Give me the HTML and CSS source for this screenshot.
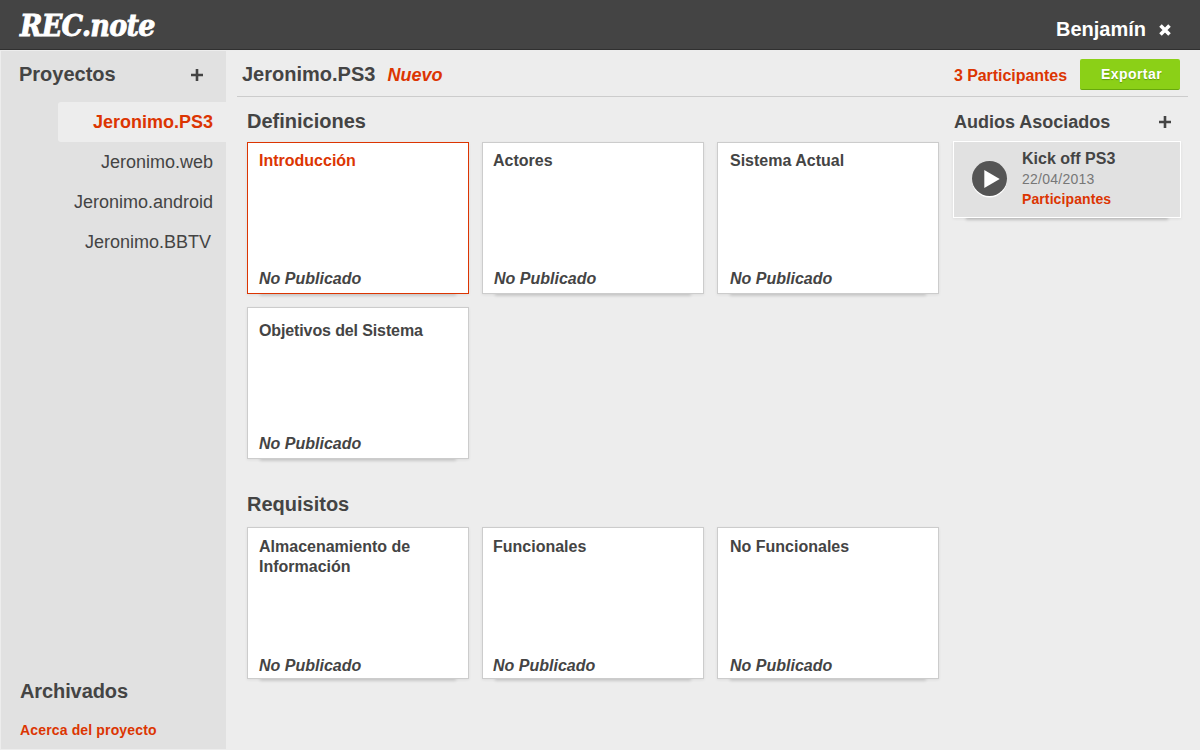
FILE: index.html
```
<!DOCTYPE html>
<html lang="es">
<head>
<meta charset="utf-8">
<title>REC.note</title>
<link rel="stylesheet" href="styles.css">
</head>
<body>
<header class="topbar">
  <div class="logo">REC.note</div>
  <div class="user">Benjamín
    <svg class="close" width="12" height="12" viewBox="0 0 12 12"><path d="M1.5 1.5L10.5 10.5M10.5 1.5L1.5 10.5"/></svg>
  </div>
</header>
<div class="layout">
  <aside class="sidebar">
    <div class="side-head"><h2>Proyectos</h2><svg class="plus" width="12" height="12" viewBox="0 0 12 12"><path d="M6 0V12M0 6H12"/></svg></div>
    <nav class="projects">
      <a class="project active">Jeronimo.PS3</a>
      <a class="project">Jeronimo.web</a>
      <a class="project">Jeronimo.android</a>
      <a class="project last">Jeronimo.BBTV</a>
    </nav>
    <h2 class="archived">Archivados</h2>
    <a class="about">Acerca del proyecto</a>
  </aside>
  <main class="main">
    <div class="page-head">
      <h1>Jeronimo.PS3</h1><a class="new">Nuevo</a>
      <a class="people">3 Participantes</a><button class="export">Exportar</button>
    </div>
    <div class="content">
      <div class="sections">
        <h2 class="section-title">Definiciones</h2>
        <div class="cards">
          <article class="card selected"><h3>Introducción</h3><p>No Publicado</p></article>
          <article class="card middle"><h3>Actores</h3><p>No Publicado</p></article>
          <article class="card right"><h3>Sistema Actual</h3><p>No Publicado</p></article>
          <article class="card second-row"><h3>Objetivos del Sistema</h3><p>No Publicado</p></article>
        </div>
        <h2 class="section-title requirements">Requisitos</h2>
        <div class="cards lower">
          <article class="card"><h3>Almacenamiento de Información</h3><p>No Publicado</p></article>
          <article class="card middle"><h3>Funcionales</h3><p>No Publicado</p></article>
          <article class="card right"><h3>No Funcionales</h3><p>No Publicado</p></article>
        </div>
      </div>
      <div class="audios">
        <div class="audio-head"><h2>Audios Asociados</h2><svg class="plus" width="12" height="12" viewBox="0 0 12 12"><path d="M6 0V12M0 6H12"/></svg></div>
        <article class="audio">
          <svg class="play" width="36" height="38" viewBox="0 0 36 38"><circle cx="17.5" cy="20" r="17.5" fill="#fff"/><circle cx="17.5" cy="18.5" r="17.5" fill="#555"/><path d="M12.3 10L27.7 19L12.3 28Z" fill="#fff"/></svg>
          <div class="audio-info"><h3>Kick off PS3</h3><time>22/04/2013</time><a>Participantes</a></div>
        </article>
      </div>
    </div>
  </main>
</div>
</body>
</html>
```
FILE: styles.css
```
* { box-sizing: border-box; }
body { margin: 0; height: 750px; overflow: hidden; background: #ededed; color: #444; font-family: "Liberation Sans", Arial, sans-serif; }
h1, h2, h3, p { margin: 0; }
h1, h2 { font-size: 20px; line-height: 24px; }
.topbar { height: 50px; background: #444; border-bottom: 1px solid #303030; display: flex; justify-content: space-between; padding: 0 30px 0 20px; color: #fff; }
.logo { font: italic bold 30px/51px "DejaVu Serif Condensed", "DejaVu Serif", serif; font-stretch: condensed; letter-spacing: -.75px; -webkit-text-stroke: .8px #fff; }
.user { display: flex; align-items: center; gap: 12px; height: 58px; font-size: 20px; font-weight: bold; }
.close { stroke: #fff; stroke-width: 3.6; margin: 2px -1px 0 1px; }
.plus { stroke: #444; stroke-width: 2.6; margin-top: 1px; }
.layout { display: flex; height: 700px; }
.sidebar { width: 225px; margin: 1px 0 1px 1px; background: #e1e1e1; display: flex; flex-direction: column; }
.side-head { display: flex; justify-content: space-between; align-items: center; padding: 11px 23px 0 18px; }
.projects { margin: 16px 0 0 57px; display: flex; flex-direction: column; }
.project { height: 40px; line-height: 40px; padding-right: 13px; text-align: right; font-size: 18px; }
.project.last { padding-right: 15px; }
.project.active { background: #ededed; color: #dc3502; font-weight: bold; border-radius: 3px 0 0 3px; }
.archived { margin: auto 0 0 19px; letter-spacing: -.1px; }
.about { margin: 17px 0 9px 19px; font-size: 14px; line-height: 20px; letter-spacing: .15px; font-weight: bold; color: #dc3502; }
.main { flex: 1; padding: 0 12px 0 11px; }
.page-head { height: 47px; border-bottom: 1px solid #ccc; display: flex; align-items: flex-start; padding: 9px 8px 0 5px; }
.page-head h1 { line-height: 30px; }
.new { margin-left: 12px; font-size: 18px; line-height: 32px; font-style: italic; font-weight: bold; color: #dc3502; }
.people { margin-left: auto; font-size: 16px; line-height: 34px; letter-spacing: -.05px; font-weight: bold; color: #dc3502; }
.export { width: 100px; height: 31px; margin-left: 13px; border: 0; border-bottom: 1px solid #67a80d; border-radius: 2px; background: #8bd017; color: #fff; font: bold 14px/30px "Liberation Sans", sans-serif; letter-spacing: .45px; padding: 0 0 0 3px; text-shadow: 0 1px 1px #5f9c0b; }
.content { display: flex; padding: 12px 7px 0 10px; }
.sections { width: 692px; margin-right: 14px; }
.section-title { margin-bottom: 9px; }
.requirements { margin-top: 33px; margin-bottom: 11px; }
.cards { display: grid; grid-template-columns: repeat(3, 222px); grid-auto-rows: 152px; gap: 13px; }
.card { background: #fff; border: 1px solid #ccc; padding: 8px 35px 4px 11px; display: flex; flex-direction: column; box-shadow: 0 1px 3px rgba(0,0,0,.07), 0 15px 3px -13px rgba(0,0,0,.12); font-size: 16px; line-height: 20px; }
.card h3 { font-size: 16px; line-height: 20px; }
.card p { margin-top: auto; font-style: italic; font-weight: bold; }
.card.middle { padding-left: 10px; }
.cards:not(.lower) .card.middle p { margin-left: 1px; }
.card.right { padding-left: 12px; }
.card.selected { border-color: #dc3502; }
.card.selected h3 { color: #dc3502; }
.card.second-row { padding-top: 13px; }
.card.second-row h3 { letter-spacing: -.12px; }
.lower .card { padding-top: 9px; padding-bottom: 2px; }
.audios { flex: 1; }
.audio-head { display: flex; align-items: center; justify-content: space-between; padding: 1px 10px 0 1px; }
.audio-head h2 { font-size: 18px; }
.audio-head .plus { margin-top: 0; }
.audio { height: 77px; margin-top: 7px; border: 1px solid #fff; background: #e1e1e1; display: flex; padding: 7px 18px; box-shadow: 0 1px 3px rgba(0,0,0,.07), 0 15px 3px -13px rgba(0,0,0,.18); }
.play { margin-top: 11px; }
.audio-info { display: flex; flex-direction: column; margin-left: 14px; font-size: 14px; line-height: 20px; }
.audio-info h3 { font-size: 16px; }
.audio-info time { color: #777; letter-spacing: .25px; }
.audio-info a { color: #dc3502; font-weight: bold; letter-spacing: .1px; }
```
